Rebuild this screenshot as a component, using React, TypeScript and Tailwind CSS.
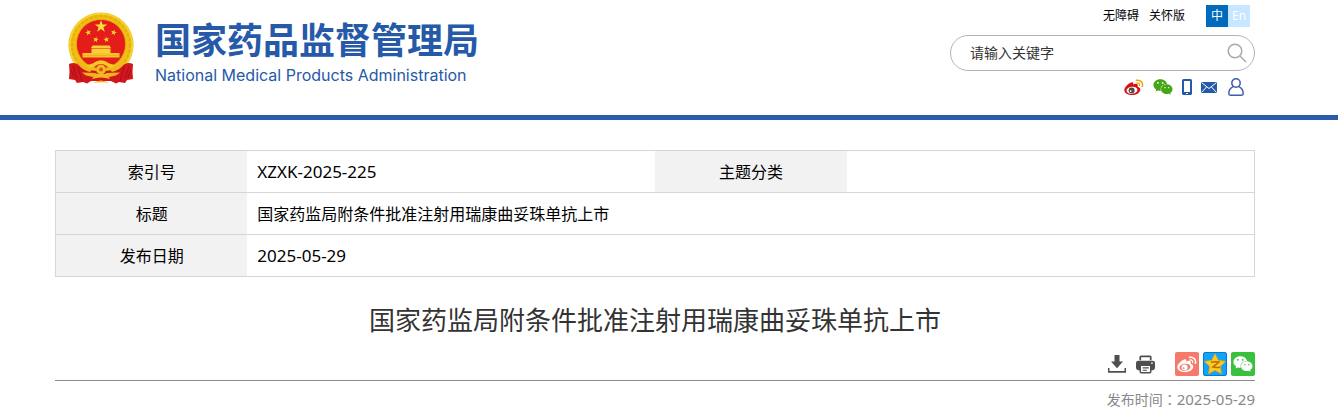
import type { ReactNode } from 'react';
import { FaWeixin } from 'react-icons/fa';

const star = (cx: number, cy: number, r: number, turn = 0, inner = 0.4) =>
  Array.from({ length: 10 }, (_, i) => {
    const a = ((turn - 90 + i * 36) * Math.PI) / 180;
    const k = i % 2 ? r * inner : r;
    return `${(cx + k * Math.cos(a)).toFixed(2)},${(cy + k * Math.sin(a)).toFixed(2)}`;
  }).join(' ');

function Emblem() {
  return (
    <svg viewBox="0 0 66 72" className="h-[72px] w-[66px] shrink-0" aria-hidden="true">
      <circle cx="33" cy="33" r="32.6" fill="#efbf14" />
      <circle cx="33" cy="33" r="29" fill="none" stroke="#e5ae12" strokeWidth="2" strokeDasharray="3 2" />
      <circle cx="33" cy="33" r="31.2" fill="none" stroke="#f7d531" strokeWidth="1.6" />
      <circle cx="33" cy="32" r="24.6" fill="#e41d1a" stroke="#e9ae12" strokeWidth="0.8" />
      <polygon points={star(33, 14.5, 6.4)} fill="#fbe03a" />
      <polygon points={star(20.3, 20.5, 3.1, -15)} fill="#fbd72f" />
      <polygon points={star(45.7, 20.5, 3.1, 15)} fill="#fbd72f" />
      <polygon points={star(27.8, 27.5, 3.1, 10)} fill="#fbd72f" />
      <polygon points={star(38.4, 27.5, 3.1, -10)} fill="#fbd72f" />
      <path d="M23 36h20l-1.500-2.500h-17zM23.500 36.500h19V41h-19z" fill="#f8cf35" />
      <path d="M14.500 41h37v4.500h-37z" fill="#f5c52a" />
      <path d="M14.500 43.500h37" stroke="#dd981a" strokeWidth="0.4" />
      <path d="M1 52c4-2 7-1 10 1 6 4 13 6 22 6s16-2 22-6c3-2 6-3 10-1l-.5 8 .5 7-6 1-2 3-6-1-3 1.500-5-2.500h-20l-4 2.500-4-1.500-6 1-2-3-6-1 .5-7z" fill="#d2171c" />
      <path d="M5 54 9 67M10 55l4 14M61 54l-4 13M56 55l-4 14M3 58l3 7M63 58l-3 7" stroke="#a80f18" strokeWidth="1" fill="none" />
      <path d="M11 48q6 8 14 8.500l-3 3.500q-8-2-12-8zM55 48q-6 8-14 8.500l3 3.500q8-2 12-8z" fill="#efb91b" />
      <path d="M18 53q7-1 9-3 6-3.500 12 0 2 2 9 3l-5 3q-4-1-6-3-4-2-8 0-2 2-6 3z" fill="#f5c928" />
      <circle cx="33" cy="57.5" r="4.800" fill="#f0bd22" stroke="#dd981a" strokeWidth="0.6" />
      <circle cx="33" cy="57.5" r="2" fill="#e0521c" />
      <path d="M14 60.500q10 0 15 1l-4 3.500q-8-1-11-4.500zM52 60.500q-10 0-15 1l4 3.500q8-1 11-4.500z" fill="#efb41b" />
      <path d="M27 62h12l3 5q-9-3-18 0zM25 71q8-5 16 0-8-1.500-16 0z" fill="#f0ba20" />
    </svg>
  );
}

function Weibo({ body, eye, pupil, waves, className }: { body: string; eye: string; pupil: string; waves: string; className: string }) {
  return (
    <svg viewBox="0 0 20 17" className={className} aria-hidden="true">
      <path
        d="M7.300 3.500c1.500-.5 2.200.2 2 1.900 1.800-.8 4.800-1 4.500 1.300-.1.800-.3 1 .4 1.300 1.400.5 2.200 1.600 2 3-.4 3-4 5-8.200 5S.3 14 .3 11.200c0-3 4.200-7 7-7.700z"
        fill={body}
      />
      <ellipse cx="8" cy="11.300" rx="5.500" ry="3.600" fill={eye} transform="rotate(-8 8 11.300)" />
      <circle cx="7.600" cy="11.400" r="3" fill={pupil} />
      <circle cx="6.700" cy="12.100" r=".9" fill={eye} />
      <path d="M12.500 1.300c4-.8 6.800 2.300 5.900 6" fill="none" stroke={waves} strokeWidth="1.500" strokeLinecap="round" />
      <path d="M13 4c1.800-.3 2.900.9 2.600 2.500" fill="none" stroke={waves} strokeWidth="1.300" strokeLinecap="round" />
    </svg>
  );
}

function Phone() {
  return (
    <svg viewBox="0 0 10 16" className="h-4 w-[10px]" aria-hidden="true">
      <rect width="10" height="16" rx="1.600" fill="#2659a8" />
      <rect x="2" y="2" width="6" height="11" fill="#fff" />
      <rect x="4" y="14" width="2" height="1" fill="#fff" />
    </svg>
  );
}

function Mail() {
  return (
    <svg viewBox="0 0 16 11" className="h-[11px] w-4" aria-hidden="true">
      <rect width="16" height="11" fill="#2659a8" />
      <path d="m.5.500 7.500 6 7.500-6M.5 10.500l5-5.500M15.500 10.500l-5-5.500" fill="none" stroke="#fff" strokeWidth="1" />
    </svg>
  );
}

function Person() {
  return (
    <svg viewBox="0 0 16 18" className="h-[18px] w-4" fill="none" stroke="#3f5bad" strokeWidth="1.500" aria-hidden="true">
      <circle cx="8" cy="5" r="4.200" />
      <path d="M5.300 8.600C2.400 9.800.8 12.500.8 15.500q0 1.700 1.500 1.700h11.400q1.500 0 1.500-1.700c0-3-1.600-5.700-4.500-6.900" />
    </svg>
  );
}

function Magnifier() {
  return (
    <svg viewBox="0 0 20 20" className="size-5" fill="none" stroke="#aaa" strokeWidth="1.500" aria-hidden="true">
      <circle cx="8" cy="8" r="6.800" />
      <path d="m13 13 6 6" />
    </svg>
  );
}

function Download() {
  return (
    <svg viewBox="0 0 18 18" className="size-[18px]" fill="#4f4f4f" aria-hidden="true">
      <path d="M6.500 0h5v6.500H15l-6 6.800-6-6.800h3.500z" />
      <path d="M0 13h1.500v3h15v-3H18v4.800H0z" />
    </svg>
  );
}

function Printer() {
  return (
    <svg viewBox="0 0 20 19" className="h-[19px] w-[19px]" aria-hidden="true">
      <path d="M4.500 5V1.700q0-.7.700-.7h9.600q.7 0 .7.700V5" fill="none" stroke="#4f4f4f" strokeWidth="1.800" />
      <path d="M2.500 5.500h15Q20 5.500 20 8v5q0 2.500-2.500 2.500h-15Q0 15.500 0 13V8q0-2.500 2.500-2.500z" fill="#4f4f4f" />
      <rect x="4.500" y="10.300" width="11" height="7.900" rx="1" fill="#fff" stroke="#4f4f4f" strokeWidth="1.600" />
      <path d="M7 13h6.500M7 15.500h4.500" stroke="#4f4f4f" strokeWidth="1.200" />
      <circle cx="16.800" cy="8" r=".9" fill="#fff" />
    </svg>
  );
}

function QzoneStar() {
  return (
    <svg viewBox="0 0 22 22" className="size-[22px]" aria-hidden="true">
      <polygon points={star(11, 11.8, 11, 0, 0.5)} fill="#ffcb1f" stroke="#f4a712" strokeWidth="0.8" strokeLinejoin="round" />
      <path d="M7 9.300q4-1 8-.3l-6 5q3 .8 7 .2" fill="none" stroke="#b96a05" strokeWidth="1.500" />
    </svg>
  );
}

function IconLink({ label, className = '', children }: { label: string; className?: string; children: ReactNode }) {
  return (
    <a href="#" aria-label={label} className={`flex items-center justify-center ${className}`}>
      {children}
    </a>
  );
}

const labelCell = 'w-[16%] bg-[#f2f2f2] text-center font-normal';
const valueCell = 'px-[10px]';

export default function App() {
  return (
    <div className="bg-white font-['Noto_Sans','Noto_Sans_CJK_SC',sans-serif] text-black">
      <header className="border-b-5 border-[#2a5caa] pr-7">
        <div className="mx-auto flex max-w-[1200px] items-start justify-between pt-[5px] pb-[19px]">
          <a href="#" className="flex items-start gap-[21px] pt-[7px] pl-[13px] text-[#2659a8]">
            <Emblem />
            <span className="flex flex-col pt-[9px] whitespace-nowrap">
              <span className="text-[36px] leading-10 font-bold">国家药品监督管理局</span>
              <span className="font-['Inter',sans-serif] text-base leading-7">National Medical Products Administration</span>
            </span>
          </a>

          <div className="flex w-[305px] flex-col">
            <div className="flex h-[22px] items-center justify-end pr-[5px] text-xs">
              <a href="#">无障碍</a>
              <a href="#" className="ml-[10px]">关怀版</a>
              <a href="#" className="ml-[21px] flex size-[22px] items-center justify-center bg-[#006bbd] text-white">中</a>
              <a href="#" className="flex size-[22px] items-center justify-center bg-[#c7e6ff] text-white">En</a>
            </div>
            <form className="mt-2 flex h-9 items-center rounded-full border border-[#b3b3b3] pr-[7px] pl-[19px]">
              <input
                type="text"
                aria-label="请输入关键字"
                placeholder="请输入关键字"
                className="min-w-0 flex-1 text-sm text-[#333] outline-none placeholder:text-[#333]"
              />
              <button type="button" aria-label="搜索">
                <Magnifier />
              </button>
            </form>
            <div className="mt-[7px] flex h-[18px] items-center justify-end gap-[9px] pr-[11px]">
              <IconLink label="微博">
                <Weibo body="#e00d10" eye="#fff" pupil="#4a4a4a" waves="#eaa80c" className="h-[17px] w-5" />
              </IconLink>
              <IconLink label="微信">
                <FaWeixin className="size-5 text-[#45a616]" />
              </IconLink>
              <IconLink label="手机">
                <Phone />
              </IconLink>
              <IconLink label="邮箱">
                <Mail />
              </IconLink>
              <IconLink label="个人中心" className="pl-[2px]">
                <Person />
              </IconLink>
            </div>
          </div>
        </div>
      </header>

      <main className="pt-[30px] pr-7">
        <div className="mx-auto max-w-[1200px]">
          <table className="w-full table-fixed border-collapse border border-[#d6d6d6] text-base">
            <tbody>
              <tr className="h-[42px] border-b border-[#d6d6d6]">
                <th scope="row" className={labelCell}>索引号</th>
                <td className={`w-[34%] text-[17px] ${valueCell}`}>XZXK-2025-225</td>
                <th scope="row" className={labelCell}>主题分类</th>
                <td className={valueCell} />
              </tr>
              <tr className="h-[42px] border-b border-[#d6d6d6]">
                <th scope="row" className={labelCell}>标题</th>
                <td colSpan={3} className={valueCell}>国家药监局附条件批准注射用瑞康曲妥珠单抗上市</td>
              </tr>
              <tr className="h-[42px]">
                <th scope="row" className={labelCell}>发布日期</th>
                <td colSpan={3} className={`text-[17px] ${valueCell}`}>2025-05-29</td>
              </tr>
            </tbody>
          </table>

          <h1 className="mt-[23px] text-center text-[26px] leading-10 text-[#333]">国家药监局附条件批准注射用瑞康曲妥珠单抗上市</h1>

          <div className="mt-3 flex items-center justify-end border-b border-[#8c8c8c] pb-1">
            <button type="button" aria-label="下载">
              <Download />
            </button>
            <button type="button" aria-label="打印" className="ml-[10px]">
              <Printer />
            </button>
            <div className="ml-5 flex gap-1">
              <IconLink label="分享到微博" className="size-6 rounded-xs bg-[#f67a6b]">
                <Weibo body="#fff" eye="#f67a6b" pupil="#fff" waves="#fff" className="h-[17px] w-5" />
              </IconLink>
              <IconLink label="分享到QQ空间" className="size-6 rounded-xs border border-[#0b78d0] bg-[#12a4f7]">
                <QzoneStar />
              </IconLink>
              <IconLink label="分享到微信" className="size-6 rounded-xs bg-[#3bbf3e]">
                <FaWeixin className="size-5 text-white" />
              </IconLink>
            </div>
          </div>

          <p className="mt-[6px] flex items-center justify-end leading-6 text-[#888]">
            <span className="font-['Noto_Sans_CJK_TC',sans-serif] text-sm leading-6" lang="zh-TW">发布时间：</span>
            <time dateTime="2025-05-29" className="text-[15px] leading-6">2025-05-29</time>
          </p>
        </div>
      </main>
    </div>
  );
}
